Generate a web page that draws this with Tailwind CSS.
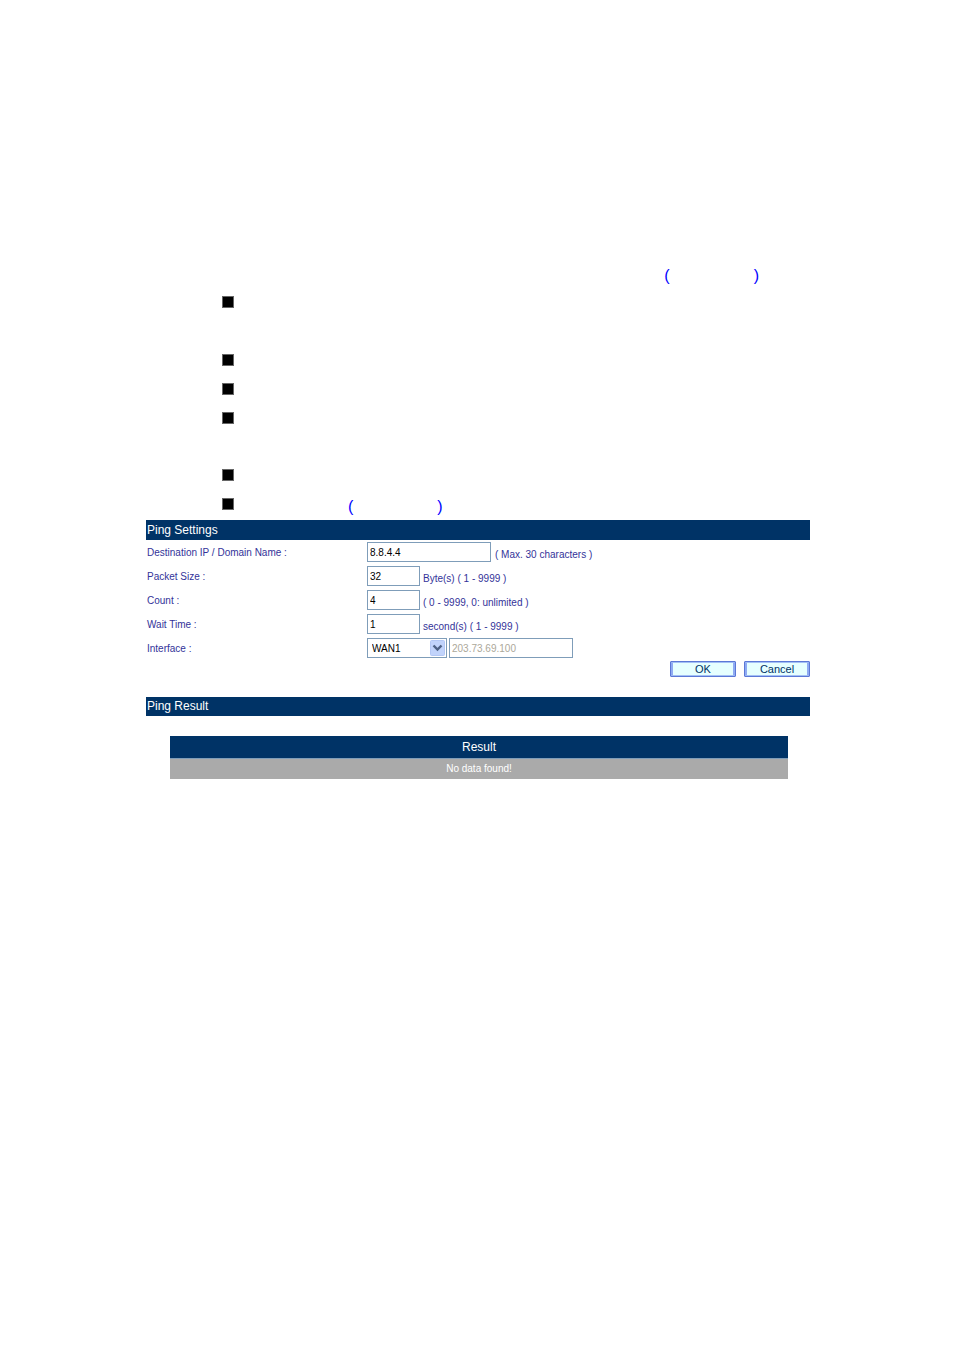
<!DOCTYPE html>
<html lang="en">
<head>
  <meta charset="UTF-8">
  <meta name="viewport" content="width=device-width, initial-scale=1.0">
  <title>Ping</title>
  <script src="https://cdn.jsdelivr.net/npm/@tailwindcss/browser@4"></script>
</head>
<body class="bg-white min-h-screen font-['Liberation_Sans',Arial,sans-serif] text-[10px] text-[#333399]">
  <main class="pt-[264px] pl-[146px] pr-[144px]">

    <!-- Notes -->
    <p class="flex justify-end gap-[84px] h-6 pr-[51px] text-base leading-6 text-[#0000ff]"><span>(</span><span>)</span></p>
    <ul class="pl-[76px]">
      <li class="h-[58px] pt-2"><div class="size-3 border border-[#666666] bg-black"></div></li>
      <li class="h-[29px] pt-2"><div class="size-3 border border-[#666666] bg-black"></div></li>
      <li class="h-[29px] pt-2"><div class="size-3 border border-[#666666] bg-black"></div></li>
      <li class="h-[57px] pt-2"><div class="size-3 border border-[#666666] bg-black"></div></li>
      <li class="h-[29px] pt-2"><div class="size-3 border border-[#666666] bg-black"></div></li>
      <li class="flex h-[30px] pt-2">
        <div class="size-3 border border-[#666666] bg-black"></div>
        <p class="flex gap-[84px] pl-[114px] text-base leading-[18px] text-[#0000ff]"><span>(</span><span>)</span></p>
      </li>
    </ul>

    <!-- Ping settings -->
    <form>
      <h2 class="bg-[#003366] text-white text-xs leading-5 pl-px">Ping Settings</h2>
      <div class="flex h-6 items-center">
        <label for="dest" class="w-[221px] pl-px">Destination IP / Domain Name :</label>
        <input id="dest" type="text" maxlength="30" value="8.8.4.4" class="w-[124px] h-5 border border-[#7f9db9] px-[2px] text-black">
        <span class="pl-1 pt-1">( Max. 30 characters )</span>
      </div>
      <div class="flex h-6 items-center">
        <label for="size" class="w-[221px] pl-px">Packet Size :</label>
        <input id="size" type="text" value="32" class="w-[53px] h-5 border border-[#7f9db9] px-[2px] text-black">
        <span class="pl-[3px] pt-1">Byte(s) ( 1 - 9999 )</span>
      </div>
      <div class="flex h-6 items-center">
        <label for="count" class="w-[221px] pl-px">Count :</label>
        <input id="count" type="text" value="4" class="w-[53px] h-5 border border-[#7f9db9] px-[2px] text-black">
        <span class="pl-[3px] pt-1">( 0 - 9999, 0: unlimited )</span>
      </div>
      <div class="flex h-6 items-center">
        <label for="wait" class="w-[221px] pl-px">Wait Time :</label>
        <input id="wait" type="text" value="1" class="w-[53px] h-5 border border-[#7f9db9] px-[2px] text-black">
        <span class="pl-[3px] pt-1">second(s) ( 1 - 9999 )</span>
      </div>
      <div class="flex h-6 items-center">
        <label for="iface" class="w-[221px] pl-px">Interface :</label>
        <div class="relative w-20 h-5">
          <select id="iface" class="appearance-none block w-full h-full border border-[#7f9db9] bg-white pl-1 text-black">
            <option>WAN1</option>
            <option>WAN2</option>
          </select>
          <svg class="absolute right-[2px] top-[2px] pointer-events-none" width="15" height="16" viewBox="0 0 15 16">
            <rect x="0.5" y="0.5" width="14" height="15" rx="1" fill="#c1d3fb" stroke="#b3c7f5"/>
            <path d="M3.5 5.5l4 4 4-4" fill="none" stroke="#4d6185" stroke-width="2.4"/>
          </svg>
        </div>
        <input type="text" aria-label="Interface address" value="203.73.69.100" disabled class="w-[124px] h-5 ml-[2px] border border-[#7f9db9] px-[2px] bg-white text-[#aca899]">
      </div>
      <div class="flex justify-end gap-2 pt-px">
        <button type="button" class="w-[66px] h-4 rounded-[1px] border border-[#5b78d6] bg-[#e6ffff] p-0 text-[11px] text-[#003366]">
          <span class="block size-full border-x-2 border-y border-x-[#8fabf3] border-y-[#a3c0f5] leading-3">OK</span>
        </button>
        <button type="button" class="w-[66px] h-4 rounded-[1px] border border-[#5b78d6] bg-[#e6ffff] p-0 text-[11px] text-[#003366]">
          <span class="block size-full border-x-2 border-y border-x-[#8fabf3] border-y-[#a3c0f5] leading-3">Cancel</span>
        </button>
      </div>
    </form>

    <!-- Ping result -->
    <section class="pt-5">
      <h2 class="bg-[#003366] text-white text-xs leading-[19px] pl-px">Ping Result</h2>
      <div class="pt-5 pl-6 pr-[22px]">
        <table class="w-full text-center text-white">
          <thead>
            <tr><th class="h-[22px] bg-[#003366] p-0 text-xs font-normal">Result</th></tr>
          </thead>
          <tbody>
            <tr><td class="h-[21px] border-t border-[#7f9db9] bg-[#aaaaaa] p-0">No data found!</td></tr>
          </tbody>
        </table>
      </div>
    </section>
  </main>
</body>
</html>
